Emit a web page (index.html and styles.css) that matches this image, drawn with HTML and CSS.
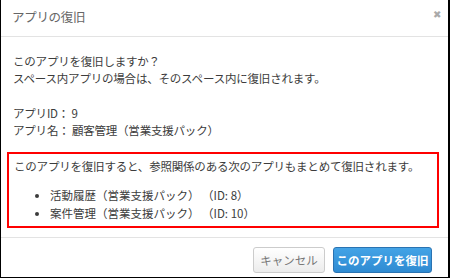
FILE: index.html
```html
<!DOCTYPE html>
<html lang="ja">
<head>
  <meta charset="UTF-8">
  <meta name="viewport" content="width=device-width, initial-scale=1">
  <title>アプリの復旧</title>
  <link rel="stylesheet" href="styles.css">
</head>
<body>
  <div class="dialog" role="dialog" aria-label="アプリの復旧">
    <div class="dialog-header">
      <span class="dialog-title">アプリの復旧</span>
      <button type="button" class="close" aria-label="閉じる">&#x2716;</button>
    </div>
    <div class="dialog-body">
      <p class="text">このアプリを復旧しますか？<br>スペース内アプリの場合は、そのスペース内に復旧されます。</p>
      <p class="text info">アプリID： 9<br>アプリ名： 顧客管理（営業支援パック）</p>
      <div class="related">
        <p class="related-title">このアプリを復旧すると、参照関係のある次のアプリもまとめて復旧されます。</p>
        <ul class="related-list">
          <li>活動履歴（営業支援パック） （ID: 8）</li>
          <li>案件管理（営業支援パック） （ID: 10）</li>
        </ul>
      </div>
    </div>
    <div class="dialog-footer">
      <button type="button" class="btn btn-cancel">キャンセル</button>
      <button type="button" class="btn btn-primary">このアプリを復旧</button>
    </div>
  </div>
</body>
</html>
```

FILE: styles.css
```css
* {
  box-sizing: border-box;
}
body {
  margin: 0;
  background: #fff;
  font-family: "Noto Sans CJK JP", "Noto Sans", sans-serif;
  color: #3c3c3c;
}
.dialog {
  width: 450px;
  height: 278px;
  background: #fff;
  border-left: 1px solid #000;
  border-right: 2px solid #000;
  border-bottom: 1px solid #000;
  display: flex;
  flex-direction: column;
}
.dialog-header {
  height: 37px;
  border-bottom: 1px solid #e3e3e3;
  display: flex;
  align-items: center;
  justify-content: space-between;
  padding: 0 7px 4px 11px;
}
.dialog-title {
  font-size: 12.5px;
  color: #666;
  letter-spacing: -0.3px;
}
.close {
  border: none;
  background: none;
  color: #aaa;
  font-size: 10px;
  padding: 0;
  margin-bottom: 4px;
  cursor: pointer;
}
.dialog-body {
  padding: 16px 9px 0 6px;
  font-size: 11.5px;
  line-height: 17px;
}
.text {
  margin: 0;
  padding-left: 6px;
  letter-spacing: -0.2px;
}
.info {
  margin-top: 18px;
}
.related {
  margin-top: 13px;
  border: 2px solid #f00;
  padding: 4px 6px 4px 5px;
}
.related-title {
  margin: 0;
  letter-spacing: -0.2px;
}
.related-list {
  margin: 11px 0 0;
  padding-left: 36px;
  line-height: 18px;
}
.dialog-footer {
  margin-top: 9px;
  border-top: 1px solid #e3e3e3;
  padding: 9px 16px 0 0;
  display: flex;
  justify-content: flex-end;
  gap: 8px;
}
.btn {
  height: 26px;
  border-radius: 3px;
  font-family: inherit;
  font-size: 11.5px;
  cursor: pointer;
  padding: 0;
}
.btn-cancel {
  width: 72px;
  border: 1px solid #ccc;
  background: linear-gradient(#fff, #ececec);
  color: #777;
}
.btn-primary {
  width: 99px;
  border: 1px solid #2a73b2;
  background: linear-gradient(#43a3e6, #2f8bd2);
  color: #fff;
  font-weight: 700;
}
```
